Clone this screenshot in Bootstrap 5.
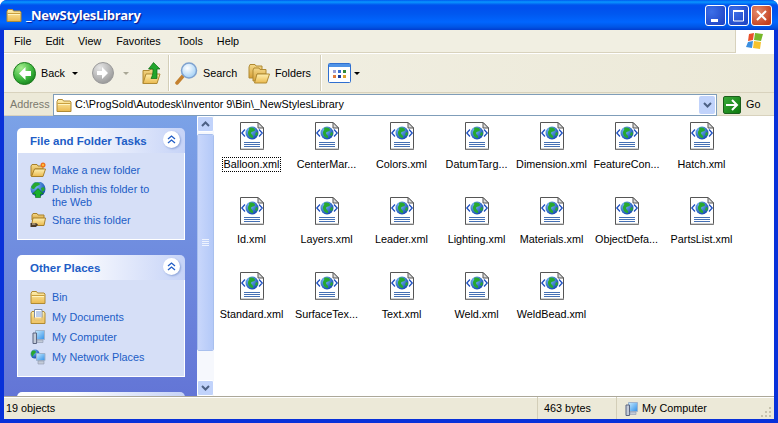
<!DOCTYPE html>
<html lang="en">
<head>
<meta charset="UTF-8">
<title>_NewStylesLibrary</title>
<link href="https://cdn.jsdelivr.net/npm/bootstrap@5.3.0/dist/css/bootstrap.min.css" rel="stylesheet">
<style>
html, body { height: 100%; }
body { background: #fff; font: 10.8px/13px "Liberation Sans", Arial, sans-serif; color: #000; overflow: hidden; }
svg { display: block; flex: none; }
.xp-window { width: 778px; height: 423px; background: #0831d9; border-radius: 7px 7px 0 0; overflow: hidden; }
.xp-title { height: 30px; flex: none; padding: 0 6px 0 6px; background: linear-gradient(#0058ee 0, #0997ff 2px, #0053ee 5px, #0050ee 8px, #0058f0 14px, #0066ff 22px, #0055e5 27px, #003dd0 30px); }
.xp-title-text { color: #fff; font: bold 13px "Open Sans", sans-serif; letter-spacing: -.3px; margin-left: 4px; text-shadow: 1px 1px 1px #0f1089; }
.xp-capbtn { width: 21px; height: 21px; margin-left: 2px; border: 1px solid #fff; border-radius: 3px; background: radial-gradient(circle at 30% 30%, #3c6fe8, #2148c8 80%); }
.xp-capbtn.xp-close { background: radial-gradient(circle at 30% 30%, #e58a6c, #c4401e 80%); }
.xp-frame { margin: 0 4px 4px; height: 389px; background: #ece9d8; }
.xp-menu { height: 23px; background: #f1efe2; border-bottom: 1px solid #d8d2bd; }
.xp-menu-items { padding-left: 3px; }
.xp-menu-items span { padding: 0 7px; }
.xp-menu-items .xp-menu-wide { padding: 0 10px 0 8px; }
.xp-flag { width: 39px; height: 23px; background: #fff; border-left: 1px solid #d8d2bd; }
.xp-tools { height: 40px; background: linear-gradient(90deg, #f3f1e6, #ece9d8); border-bottom: 1px solid #d8d2bd; border-top: 1px solid #fff; padding-left: 9px; }
.xp-sep { width: 2px; height: 36px; background: #d3ceb8; border-right: 1px solid #fff; }
.xp-caret { width: 0; height: 0; border: 3px solid transparent; border-top: 3px solid #000; border-bottom: 0; }
.xp-caret.xp-off { border-top-color: #a9a796; }
.tb-back-text { margin-left: 5px; width: 22px; }
.tb-back-caret { margin-left: 9px; }
.tb-fwd { margin-left: 14px; }
.tb-fwd-caret { margin-left: 9px; }
.tb-up { margin-left: 13px; }
.tb-sep1 { margin-left: 7px; }
.tb-search { margin-left: 5px; }
.tb-search-text { margin-left: 5px; width: 33px; }
.tb-folders { margin-left: 12px; }
.tb-folders-text { margin-left: 5px; width: 35px; }
.tb-sep2 { margin-left: 10px; }
.tb-views { margin-left: 6px; }
.tb-views-caret { margin-left: 3px; }
.xp-addr { height: 23px; background: #ece9d8; border-bottom: 1px solid #d8d2bd; padding-top: 1px; }
.xp-addr-label { width: 49px; padding-left: 6px; color: #7b7a6e; }
.xp-addr-input { width: 664px; height: 22px; background: #fff; border: 1px solid #7f9db9; padding-left: 2px; gap: 3px; }
.xp-addr-drop { width: 16px; height: 18px; margin-right: 1px; background: #c1d3fb; border-radius: 2px; }
.xp-go { width: 18px; height: 18px; margin-left: 6px; background: linear-gradient(135deg, #3aa93a, #0e7a0e); border-radius: 2px; border: 1px solid #1b5e1b; }
.xp-go-text { margin-left: 5px; }
.xp-main { height: 280px; }
.xp-side { width: 193px; padding: 12px 12px 0 13px; overflow: hidden; background: linear-gradient(#7ba2e7, #6375d6); }
.xp-pane { margin-bottom: 15px; }
.xp-pane-head { height: 25px; padding: 2px 5px 0 13px; border-radius: 5px 5px 0 0; color: #215dc6; font-weight: 700; font-size: 11.5px; background: linear-gradient(90deg, #fff 30%, #c6d3f7); }
.xp-pane-body { padding: 9px 12px 11px 12px; background: #d6dff7; border: 1px solid #fff; border-top: 0; color: #215dc6; display: flex; flex-direction: column; gap: 4px; }
.xp-link { height: 16px; gap: 6px; }
.xp-link.xp-tall { height: 26px; }
.xp-link.xp-tall span { padding-top: 1px; }
.xp-toggle { width: 17px; height: 17px; margin-top: -4px; border-radius: 50%; background: #fff; box-shadow: 1px 1px 2px #8ca3d8; }
.xp-scroll { width: 17px; background: #f6f8fd; }
.xp-scroll-btn { height: 16px; border: 1px solid #fff; border-radius: 2px; background: #c1d3fb; }
.xp-thumb { height: 217px; margin-top: 2px; border: 1px solid #fff; outline: 1px solid #a9c0ee; outline-offset: -1px; border-radius: 2px; background: linear-gradient(90deg, #c9d7fb, #b4c9f8); }
.xp-files { flex: 1; background: #fff; display: grid; grid-template-columns: repeat(7, 75px); grid-auto-rows: 75px; padding-top: 6px; }
.xp-file { gap: 7px; text-align: center; }
.xp-file-name { padding: 0 1px; white-space: nowrap; border: 1px solid transparent; }
.xp-file-name.xp-focus { border: 1px dotted #000; }
.xp-status { height: 23px; background: #ece9d8; border-top: 1px solid #aca899; box-shadow: inset 0 1px 0 #fff; position: relative; }
.xp-cell { height: 100%; padding: 1px 0 0 2px; border-right: 1px solid #d3ceb8; }
.xp-cell-a { width: 534px; }
.xp-cell-b { width: 79px; padding-left: 6px; }
.xp-cell-last { border-right: 0; flex: 1; gap: 3px; padding-left: 6px; }
.xp-grip { position: absolute; right: 2px; bottom: 2px; }
</style>
</head>
<body>
<svg width="0" height="0" class="position-absolute">
  <defs>
    <linearGradient id="fy" x1="0" y1="0" x2="0" y2="1"><stop offset="0" stop-color="#fff0b0"/><stop offset="1" stop-color="#eab94e"/></linearGradient>
    <linearGradient id="fb" x1="0" y1="0" x2="0" y2="1"><stop offset="0" stop-color="#f4d98a"/><stop offset="1" stop-color="#d69f35"/></linearGradient>
    <radialGradient id="gg" cx=".35" cy=".25" r=".85"><stop offset="0" stop-color="#a5ee8f"/><stop offset=".6" stop-color="#3cb53c"/><stop offset="1" stop-color="#107a18"/></radialGradient>
    <radialGradient id="ge" cx=".35" cy=".25" r=".85"><stop offset="0" stop-color="#e6e6e6"/><stop offset="1" stop-color="#929292"/></radialGradient>
    <radialGradient id="gb" cx=".35" cy=".3" r=".8"><stop offset="0" stop-color="#7cc0f8"/><stop offset="1" stop-color="#0a3fa8"/></radialGradient>
    <radialGradient id="lens" cx=".4" cy=".35" r=".7"><stop offset="0" stop-color="#fff"/><stop offset="1" stop-color="#9ccdf5"/></radialGradient>
    <linearGradient id="scr" x1="0" y1="0" x2="1" y2="1"><stop offset="0" stop-color="#c9ecff"/><stop offset="1" stop-color="#2f8fe8"/></linearGradient>
    <symbol id="i-xml" viewBox="0 0 24 28">
      <path d="M.5.5H18L23.500 6V27.500H.5Z" fill="#fff" stroke="#565656"/>
      <path d="M18 .5V6H23.500Z" fill="#dcdcdc" stroke="#565656"/>
      <path d="M1 27H24" stroke="#a0a0a0"/>
      <circle cx="12" cy="11" r="6.500" fill="url(#gb)"/>
      <path d="M9 6c3-1 6 0 6 2s-4 1-4 3 3 2 2 5c-2 0-5-2-5-5s2-3 1-5zM16 10l2 1-1 3-2-1z" fill="#27a82f"/>
      <path d="M5 7.500 1.800 11 5 14.500M19 7.500 22.200 11 19 14.500" fill="none" stroke="#1c4fc0" stroke-width="1.300"/>
      <path d="M4 20.500H20M4 22.500H20M4 24.500H20" stroke="#4570b4"/>
    </symbol>
    <symbol id="i-folder" viewBox="0 0 16 16">
      <path d="M1 4.500 2 2.500H6.500L7.500 4H14L15 5V14.500H1Z" fill="url(#fy)" stroke="#b08a33"/>
      <path d="M1.500 6.500H14.500" stroke="#c99f3e"/>
      <path d="M2 7.500H14" stroke="#fff4c0"/>
    </symbol>
    <symbol id="i-newfolder" viewBox="0 0 16 16">
      <path d="M1 4 2 2.500H7L8 4H13V7H5L2 14H1Z" fill="url(#fb)" stroke="#a8802a"/>
      <path d="M4.500 7H15.500L13 14.500H1.500Z" fill="url(#fy)" stroke="#a8802a"/>
      <circle cx="13" cy="3" r="2.500" fill="#f0731f"/><circle cx="13" cy="3" r="1" fill="#ffd23c"/>
    </symbol>
    <symbol id="i-sharefolder" viewBox="0 0 16 16">
      <path d="M2 3 3 1.500H7L8 3H14V8H2Z" fill="url(#fb)" stroke="#a8802a"/>
      <path d="M3 6H15.500L14 13.500H1.500Z" fill="url(#fy)" stroke="#a8802a"/>
      <path d="M.5 11H6L8 12.500 6 15H.5Z" fill="#4a3a2a"/>
      <path d="M2 12H5.500" stroke="#f2d9a8"/>
    </symbol>
    <symbol id="i-docs" viewBox="0 0 16 16">
      <path d="M1 4 2 2.500H14L15 4V14.500H1Z" fill="url(#fy)" stroke="#b08a33"/>
      <path d="M4.500.5H12V11H4.500Z" fill="#fff" stroke="#7a8aa8"/>
      <path d="M6 3H11M6 5H11M6 7H11" stroke="#7a9cd8"/>
      <path d="M2 8.500H14V14H2Z" fill="#f0c870" opacity=".85"/>
    </symbol>
    <symbol id="i-computer" viewBox="0 0 16 16">
      <path d="M5.500 1.500H14.500V10.500H5.500Z" fill="url(#scr)" stroke="#9fb3cc"/>
      <path d="M3 4H6.500V14.500H3Z" fill="#c3cbd8" stroke="#5a6480"/>
      <path d="M7 11H13V13.500H7Z" fill="#c3cbd8" stroke="#8e98ae" stroke-width=".6"/>
    </symbol>
    <symbol id="i-network" viewBox="0 0 16 16">
      <circle cx="5" cy="5" r="4.500" fill="url(#gb)"/>
      <path d="M2 2c2-1 4 0 4 1S3 5 3 7 1 6 1 4z" fill="#27a82f"/>
      <path d="M6.500 4.500H15V11.500H6.500Z" fill="url(#scr)" stroke="#9fb3cc"/>
      <path d="M8 12H14V15H8Z" fill="#c3cbd8" stroke="#8e98ae" stroke-width=".6"/>
    </symbol>
    <symbol id="i-globe" viewBox="0 0 16 16">
      <circle cx="8" cy="7" r="7.500" fill="url(#gb)"/>
      <path d="M4 1c3-1 6 0 6 1S6 4 5 6 2 7 1 5zM11 6l3-1 1 3-3 2z" fill="#27a82f"/>
      <path d="M8 6.500 13.500 12H10.500V15.500H5.500V12H2.500Z" fill="#18b02a" stroke="#0a6a14" stroke-width=".6"/>
    </symbol>
  </defs>
</svg>

<div class="xp-window d-flex flex-column">
  <div class="xp-title d-flex align-items-center">
    <svg width="16" height="16"><use href="#i-folder"/></svg>
    <div class="xp-title-text flex-grow-1">_NewStylesLibrary</div>
    <div class="d-flex">
      <div class="xp-capbtn"><svg width="19" height="19" viewBox="0 0 19 19"><rect x="5" y="13" width="7" height="3" fill="#fff"/></svg></div>
      <div class="xp-capbtn"><svg width="19" height="19" viewBox="0 0 19 19"><path d="M4.500 5H14.500V15H4.500Z" fill="none" stroke="#fff"/><rect x="4" y="4" width="11" height="2" fill="#fff"/></svg></div>
      <div class="xp-capbtn xp-close"><svg width="19" height="19" viewBox="0 0 19 19"><path d="M5 5 14 14M14 5 5 14" stroke="#fff" stroke-width="2"/></svg></div>
    </div>
  </div>
  <div class="xp-frame d-flex flex-column">
    <div class="xp-menu d-flex align-items-center">
      <div class="d-flex xp-menu-items flex-grow-1"><span>File</span><span>Edit</span><span>View</span><span class="xp-menu-wide">Favorites</span><span>Tools</span><span>Help</span></div>
      <div class="xp-flag d-flex align-items-center justify-content-center">
        <svg width="20" height="18" viewBox="0 0 20 18"><path d="M4 2 9 1 8 8 3 9Z" fill="#e8502a"/><path d="M10 1 18 2 16 9 9 8Z" fill="#76b82a"/><path d="M3 10 8 9 7 16 1 15Z" fill="#3b8fe0"/><path d="M9 9 16 10 15 17 8 16Z" fill="#f7c22c"/></svg>
      </div>
    </div>
    <div class="xp-tools d-flex align-items-center">
      <svg width="23" height="23" viewBox="0 0 23 23"><circle cx="11.500" cy="11.500" r="11" fill="url(#gg)" stroke="#1c7a1c"/><path d="M12.500 5 6 11.500 12.500 18V14H18V9H12.500Z" fill="#fff"/></svg>
      <span class="tb-back-text">Back</span>
      <span class="xp-caret tb-back-caret"></span>
      <svg class="tb-fwd" width="22" height="22" viewBox="0 0 22 22"><circle cx="11" cy="11" r="10.500" fill="url(#ge)" stroke="#9a9a9a"/><path d="M10 5l6 6-6 6v-4H5V9h5Z" fill="#fff"/></svg>
      <span class="xp-caret xp-off tb-fwd-caret"></span>
      <svg class="tb-up" width="19" height="23" viewBox="0 0 19 23"><path d="M1 8.500H7L9 7H14L12.500 21.500H1Z" fill="url(#fb)" stroke="#b08a33"/><path d="M4 12H18L15 21.500H1Z" fill="url(#fy)" stroke="#b08a33"/><path d="M11.500.5 18 7H15V16.500H9C11 13 11 10 11 7H6.500Z" fill="#22a52c" stroke="#0b6b12" stroke-width=".7"/></svg>
      <span class="xp-sep tb-sep1"></span>
      <svg class="tb-search" width="23" height="23" viewBox="0 0 23 23"><path d="M8 14 2 21" stroke="#c4812f" stroke-width="3.500" stroke-linecap="round"/><circle cx="14" cy="8.500" r="7.500" fill="url(#lens)" stroke="#7fa2cf" stroke-width="1.500"/></svg>
      <span class="tb-search-text">Search</span>
      <svg class="tb-folders" width="22" height="21" viewBox="0 0 22 21"><path d="M1 4 2 1.500H7L8 3H14V8H6L5 15H1Z" fill="url(#fb)" stroke="#b08a33"/><path d="M5 7 6 5H11L12 6.500H18V11H9L8 18H5Z" fill="url(#fb)" stroke="#b08a33"/><path d="M9 11H21.500L18.500 20H6.500Z" fill="url(#fy)" stroke="#b08a33"/></svg>
      <span class="tb-folders-text">Folders</span>
      <span class="xp-sep tb-sep2"></span>
      <svg class="tb-views" width="23" height="20" viewBox="0 0 23 20"><rect x=".5" y=".5" width="22" height="19" rx="1" fill="#fff" stroke="#2f6fd0"/><rect x="1" y="1" width="21" height="3" fill="#4f93e6"/><path d="M5 7h3v3H5z" fill="#9aa0d8"/><path d="M10 7h3v3h-3z" fill="#3a6fd0"/><path d="M15 7h3v3h-3z" fill="#2f8a3a"/><path d="M5 12h3v3H5z" fill="#e07a3c"/><path d="M10 12h3v3h-3z" fill="#1c3f9c"/><path d="M15 12h3v3h-3z" fill="#d9a12a"/></svg>
      <span class="xp-caret tb-views-caret"></span>
    </div>
    <div class="xp-addr d-flex align-items-center">
      <div class="xp-addr-label">Address</div>
      <div class="xp-addr-input d-flex align-items-center">
        <svg width="16" height="16"><use href="#i-folder"/></svg>
        <span class="flex-grow-1">C:\ProgSold\Autodesk\Inventor 9\Bin\_NewStylesLibrary</span>
        <div class="xp-addr-drop d-flex align-items-center justify-content-center"><svg width="9" height="6" viewBox="0 0 9 6"><path d="M1 1 4.500 4.500 8 1" fill="none" stroke="#4d6185" stroke-width="2"/></svg></div>
      </div>
      <div class="xp-go d-flex align-items-center justify-content-center"><svg width="14" height="12" viewBox="0 0 14 12"><path d="M1 6H12M7 1 12 6 7 11" fill="none" stroke="#fff" stroke-width="2"/></svg></div>
      <span class="xp-go-text">Go</span>
    </div>
    <div class="xp-main d-flex">
      <div class="xp-side">
        <div class="xp-pane">
          <div class="xp-pane-head d-flex align-items-center justify-content-between">File and Folder Tasks
            <div class="xp-toggle d-flex align-items-center justify-content-center"><svg width="9" height="9" viewBox="0 0 9 9"><path d="M1 4 4.500 1 8 4M1 8 4.500 5 8 8" fill="none" stroke="#215dc6" stroke-width="1.300"/></svg></div>
          </div>
          <div class="xp-pane-body">
            <div class="xp-link d-flex align-items-center"><svg width="16" height="16"><use href="#i-newfolder"/></svg>Make a new folder</div>
            <div class="xp-link xp-tall d-flex align-items-start"><svg width="16" height="16"><use href="#i-globe"/></svg><span>Publish this folder to<br>the Web</span></div>
            <div class="xp-link d-flex align-items-center"><svg width="16" height="16"><use href="#i-sharefolder"/></svg>Share this folder</div>
          </div>
        </div>
        <div class="xp-pane">
          <div class="xp-pane-head d-flex align-items-center justify-content-between">Other Places
            <div class="xp-toggle d-flex align-items-center justify-content-center"><svg width="9" height="9" viewBox="0 0 9 9"><path d="M1 4 4.500 1 8 4M1 8 4.500 5 8 8" fill="none" stroke="#215dc6" stroke-width="1.300"/></svg></div>
          </div>
          <div class="xp-pane-body">
            <div class="xp-link d-flex align-items-center"><svg width="16" height="16"><use href="#i-folder"/></svg>Bin</div>
            <div class="xp-link d-flex align-items-center"><svg width="16" height="16"><use href="#i-docs"/></svg>My Documents</div>
            <div class="xp-link d-flex align-items-center"><svg width="16" height="16"><use href="#i-computer"/></svg>My Computer</div>
            <div class="xp-link d-flex align-items-center"><svg width="16" height="16"><use href="#i-network"/></svg>My Network Places</div>
          </div>
        </div>
        <div class="xp-pane"><div class="xp-pane-head"></div></div>
      </div>
      <div class="xp-scroll d-flex flex-column">
        <div class="xp-scroll-btn d-flex align-items-center justify-content-center"><svg width="9" height="6" viewBox="0 0 9 6"><path d="M1 5 4.500 1.500 8 5" fill="none" stroke="#4d6185" stroke-width="2"/></svg></div>
        <div class="xp-thumb d-flex align-items-center justify-content-center"><svg width="7" height="8" viewBox="0 0 7 8"><path d="M0 .5H7M0 2.500H7M0 4.500H7M0 6.500H7" stroke="#eef3fe"/></svg></div>
        <div class="flex-grow-1"></div>
        <div class="xp-scroll-btn d-flex align-items-center justify-content-center"><svg width="9" height="6" viewBox="0 0 9 6"><path d="M1 1 4.500 4.500 8 1" fill="none" stroke="#4d6185" stroke-width="2"/></svg></div>
      </div>
      <div class="xp-files" id="files"></div>
    </div>
    <div class="xp-status d-flex align-items-center">
      <div class="xp-cell xp-cell-a d-flex align-items-center">19 objects</div>
      <div class="xp-cell xp-cell-b d-flex align-items-center">463 bytes</div>
      <div class="xp-cell xp-cell-last d-flex align-items-center"><svg width="16" height="16"><use href="#i-computer"/></svg>My Computer</div>
      <svg class="xp-grip" width="11" height="11" viewBox="0 0 11 11"><path d="M8 1h2v2H8zM4 5h2v2H4zM8 5h2v2H8zM0 9h2v2H0zM4 9h2v2H4zM8 9h2v2H8z" fill="#c6c2ae"/></svg>
    </div>
  </div>
</div>
<script>
  // Lista de archivos de la carpeta
  const names = ["Balloon.xml","CenterMar...","Colors.xml","DatumTarg...","Dimension.xml","FeatureCon...","Hatch.xml","Id.xml","Layers.xml","Leader.xml","Lighting.xml","Materials.xml","ObjectDefa...","PartsList.xml","Standard.xml","SurfaceTex...","Text.xml","Weld.xml","WeldBead.xml"];
  document.getElementById('files').innerHTML = names.map((n, i) => `
    <div class="xp-file d-flex flex-column align-items-center">
      <svg width="24" height="28"><use href="#i-xml"/></svg>
      <div class="xp-file-name ${i === 0 ? 'xp-focus' : ''}">${n}</div>
    </div>`).join('');
</script>
<script src="https://cdn.jsdelivr.net/npm/bootstrap@5.3.0/dist/js/bootstrap.bundle.min.js"></script>
</body>
</html>
